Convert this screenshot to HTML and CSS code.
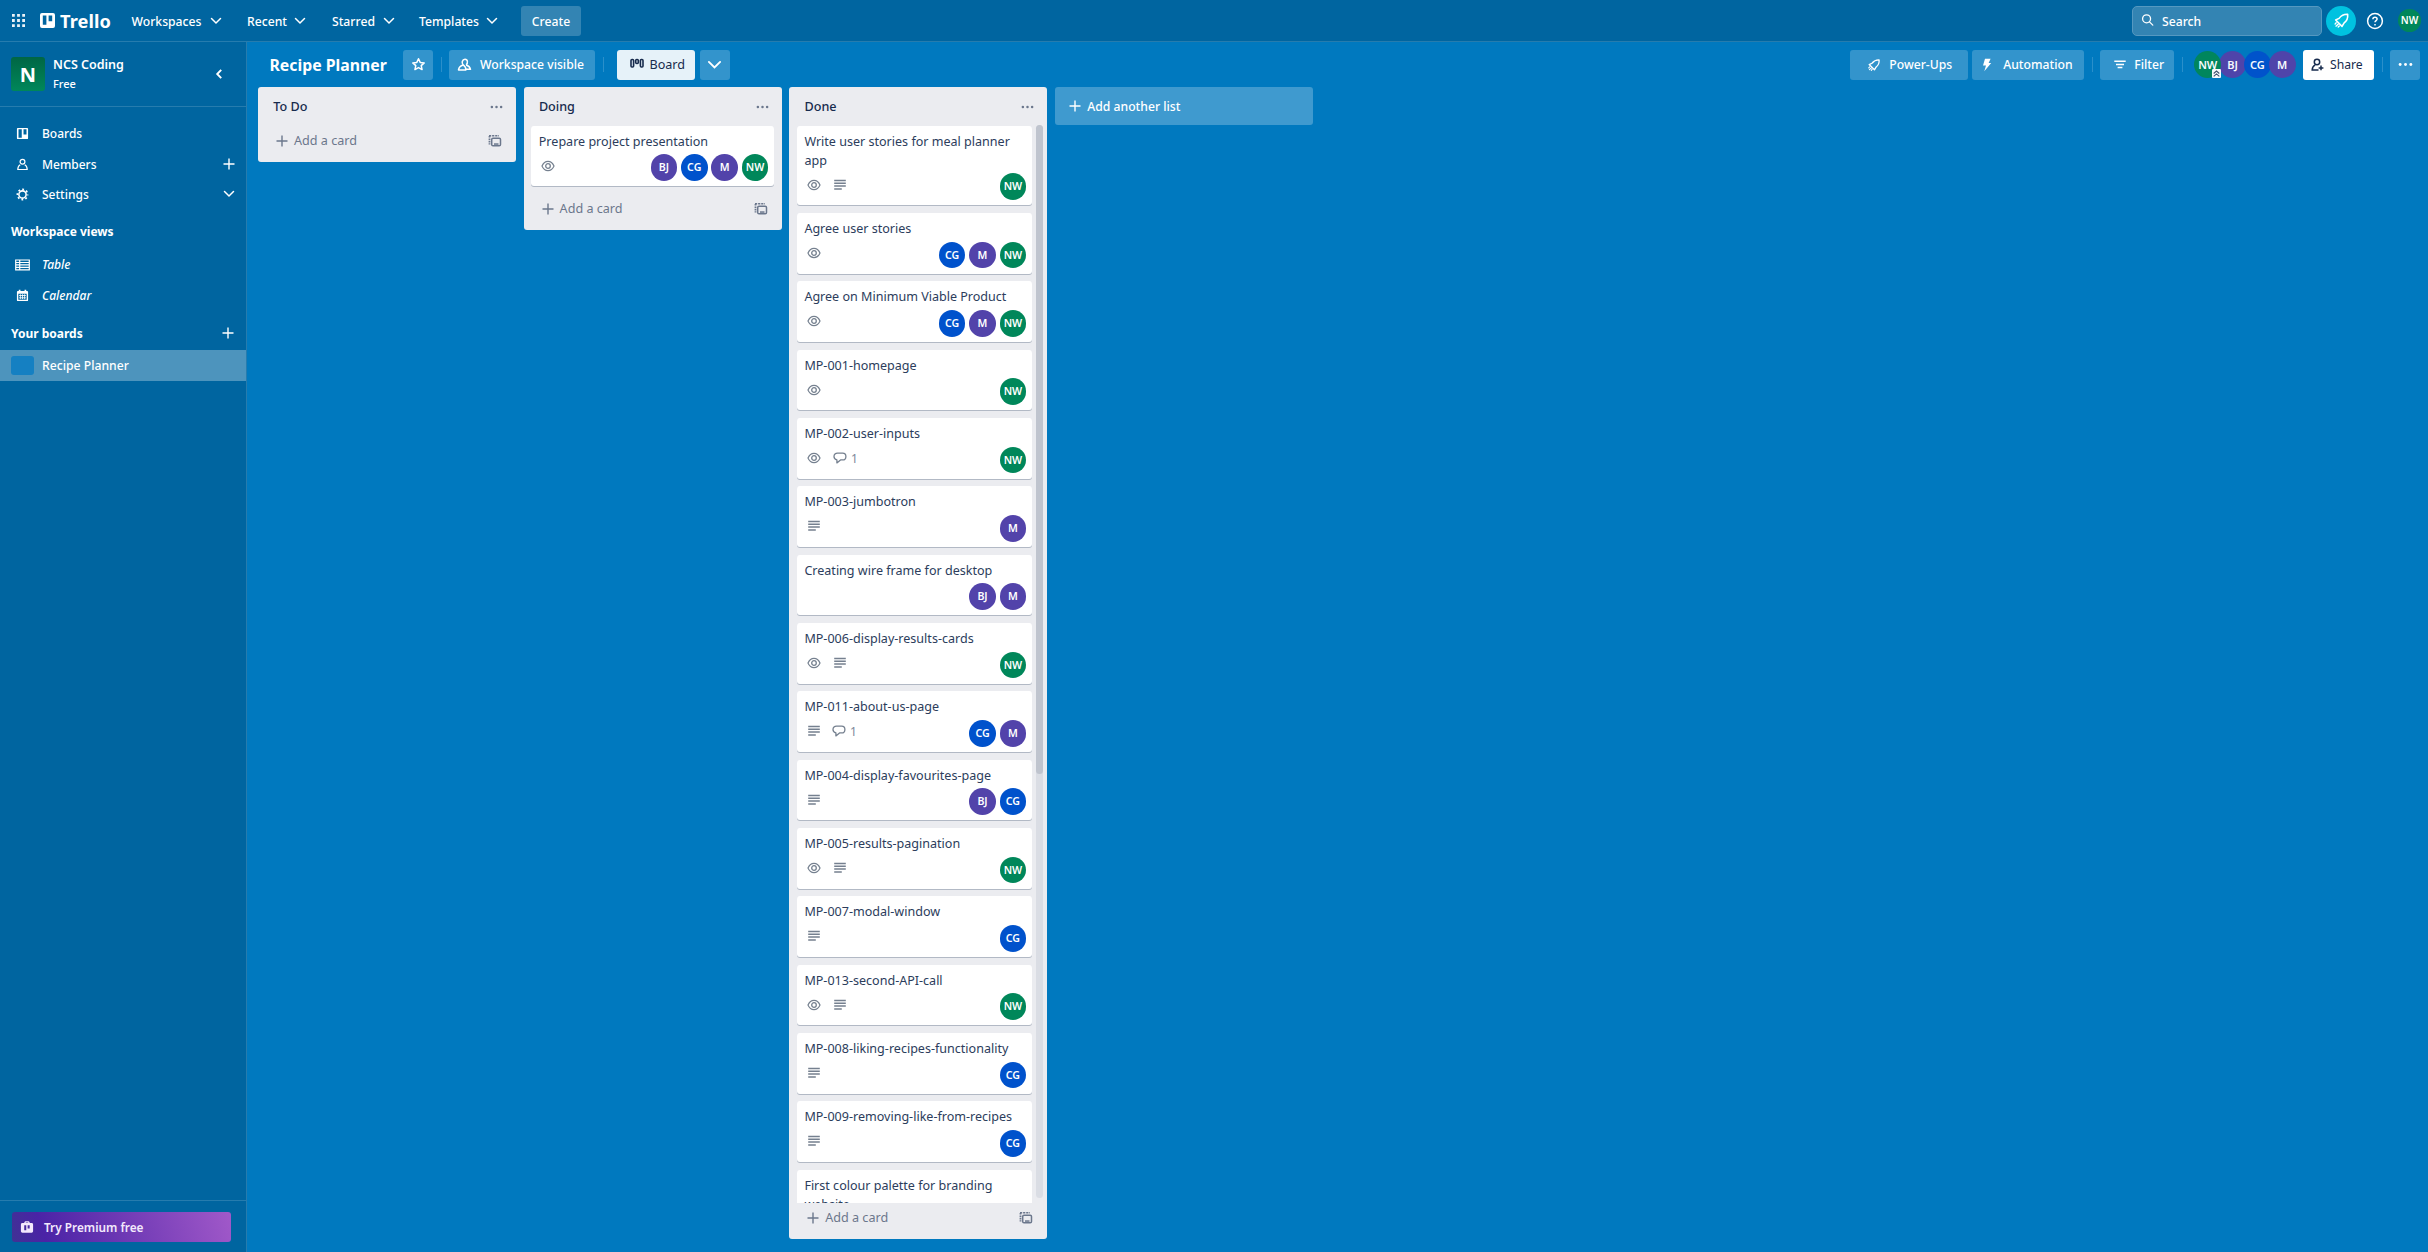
FILE: index.html
```html
<!DOCTYPE html>
<html lang="en">
<head>
<meta charset="utf-8">
<title>Recipe Planner | Trello</title>
<link rel="stylesheet" href="styles.css">
</head>
<body>
<svg class="defs" aria-hidden="true">
  <symbol id="chev" viewBox="0 0 12 8"><path d="M1.500 1.500 6 6l4.500-4.500" fill="none" stroke="currentColor" stroke-width="1.500" stroke-linecap="round"/></symbol>
  <symbol id="plus" viewBox="0 0 12 12"><path d="M6 .5v11M.5 6h11" fill="none" stroke="currentColor" stroke-width="1.400"/></symbol>
  <symbol id="eye" viewBox="0 0 14 12"><path d="M1 6C2.300 3 4.300 1.300 7 1.300S11.700 3 13 6c-1.300 3-3.300 4.700-6 4.700S2.300 9 1 6Z" fill="none" stroke="currentColor" stroke-width="1.200"/><circle cx="7" cy="6" r="2.300" fill="none" stroke="currentColor" stroke-width="1.300"/></symbol>
  <symbol id="desc" viewBox="0 0 12 12"><path d="M.2 1.500h11.600M.2 4.300h11.600M.2 7.100h11.600M.2 9.900h7.600" fill="none" stroke="currentColor" stroke-width="1.500"/></symbol>
  <symbol id="talk" viewBox="0 0 14 12"><path d="M4.500 1.200h5.200c1.900 0 3.200 1.300 3.200 3.200S11.600 7.900 9.700 7.900H7.500l-3.600 3V7.800C2 7.400 1 6.100 1 4.500 1 2.500 2.500 1.200 4.500 1.200Z" fill="none" stroke="currentColor" stroke-width="1.300" stroke-linejoin="round"/></symbol>
  <symbol id="tmpl" viewBox="0 0 14 14"><path d="M1.500 2v8.500" fill="none" stroke="currentColor" stroke-width="1.800" stroke-dasharray="1.600 .8"/><path d="M1 1.800h10" fill="none" stroke="currentColor" stroke-width="1.400" stroke-dasharray="2.200 .9"/><rect x="3.700" y="4.200" width="8.800" height="7.600" rx="1.300" fill="none" stroke="currentColor" stroke-width="1.500"/><path d="M6 9.300h4.500v1.500H6z" fill="currentColor"/></symbol>
  <symbol id="dots" viewBox="0 0 14 4"><circle cx="2" cy="2" r="1.350"/><circle cx="7" cy="2" r="1.350"/><circle cx="12" cy="2" r="1.350"/></symbol>
  <symbol id="rocket" viewBox="0 0 16 16"><path d="M13.800 2.200C10 2 7.500 3.700 5.700 6L2.500 7.500l6 6L10.500 10.200C12.800 8.500 14.200 6 13.800 2.200Z" fill="none" stroke="currentColor" stroke-width="1.500" stroke-linejoin="round"/><path d="M5 11.200 2.800 13.300M3 10.200l-1 1M5.900 13.100l-1 1" fill="none" stroke="currentColor" stroke-width="1.300" stroke-linecap="round"/></symbol>
</svg>

<header class="topbar">
  <svg class="apps" viewBox="0 0 14 14"><path d="M0 0h3v3H0zM5.500 0h3v3h-3zM11 0h3v3h-3zM0 5.500h3v3H0zM5.500 5.500h3v3h-3zM11 5.500h3v3h-3zM0 11h3v3H0zM5.500 11h3v3h-3zM11 11h3v3h-3z"/></svg>
  <div class="logo">
    <svg width="15" height="15" viewBox="0 0 15 15"><path fill-rule="evenodd" d="M2 0h11a2 2 0 0 1 2 2v11a2 2 0 0 1-2 2H2a2 2 0 0 1-2-2V2a2 2 0 0 1 2-2Zm.8 2.500v9.200h3.600V2.500Zm5.800 0v5.800h3.600V2.500Z"/></svg>
    <span>Trello</span>
  </div>
  <nav class="menu">
    <span class="m1">Workspaces<svg><use href="#chev"/></svg></span>
    <span class="m2">Recent<svg><use href="#chev"/></svg></span>
    <span class="m3">Starred<svg><use href="#chev"/></svg></span>
    <span class="m4">Templates<svg><use href="#chev"/></svg></span>
  </nav>
  <button class="create">Create</button>
  <div class="search"><svg viewBox="0 0 14 14"><circle cx="6" cy="5.700" r="4.300"/><path d="m9.200 9 3.500 3.500"/></svg>Search</div>
  <span class="news"><svg viewBox="0 0 16 16"><use href="#rocket"/></svg></span>
  <svg class="help" viewBox="0 0 18 18"><circle cx="9" cy="9" r="7.400"/><path d="M6.900 7.300c0-1.300.9-2.100 2.100-2.100s2.100.8 2.100 1.900c0 1.500-2.100 1.500-2.100 3.200"/><path d="M9 12v1.400"/></svg>
  <span class="me">NW</span>
</header>

<div class="body">
  <aside class="side">
    <div class="ws">
      <span class="ws-logo">N</span>
      <div class="ws-name"><b>NCS Coding</b><small>Free</small></div>
      <svg class="fold" viewBox="0 0 8 12"><path d="M6.200 1.800 2.200 6l4 4.200"/></svg>
    </div>
    <div class="links">
      <div class="row"><svg class="ic" viewBox="0 0 14 14"><path fill="currentColor" fill-rule="evenodd" d="M2 1h10a1 1 0 0 1 1 1v10a1 1 0 0 1-1 1H2a1 1 0 0 1-1-1V2a1 1 0 0 1 1-1Zm.7 1.500v9h3.500v-9Zm5.400 0v5.700h3.200V2.500Z"/></svg>Boards</div>
      <div class="row"><svg class="ic" viewBox="0 0 14 14"><g fill="none" stroke="currentColor" stroke-width="1.300"><circle cx="7" cy="4" r="2.600"/><path d="M4.600 7.300C2.800 8.200 2 9.700 1.900 12.400h10.200C12 9.700 11.200 8.200 9.400 7.300" stroke-linejoin="round"/></g></svg>Members<svg class="end"><use href="#plus"/></svg></div>
      <div class="row"><svg class="ic" viewBox="0 0 14 14"><circle cx="7" cy="7" r="3.900" fill="none" stroke="currentColor" stroke-width="1.700"/><circle cx="7" cy="7" r="5.500" fill="none" stroke="currentColor" stroke-width="1.800" stroke-dasharray="2 2.320" stroke-dashoffset="1"/></svg>Settings<svg class="end down"><use href="#chev"/></svg></div>
    </div>
    <h3 class="cap">Workspace views</h3>
    <div class="row it"><svg class="ic wide" viewBox="0 0 15 12"><path d="M.7 1h13.600v9.800H.7zM.7 3.500h13.600M.7 5.900h13.600M.7 8.300h13.600M4.700 1v9.800" fill="none" stroke="currentColor" stroke-width="1.200"/></svg>Table</div>
    <div class="row it"><svg class="ic" viewBox="0 0 14 14"><path fill="currentColor" fill-rule="evenodd" d="M3 .8h1.800v1.400h4.400V.8H11v1.400h1a1 1 0 0 1 1 1V12a1 1 0 0 1-1 1H2a1 1 0 0 1-1-1V3.200a1 1 0 0 1 1-1h1ZM2.500 5.200v6.300h9V5.200Z"/><path d="M3.300 7h7.400M3.300 9.500h7.400M4.700 5.700v5.200M7 5.700v5.200M9.300 5.700v5.200" stroke="currentColor" stroke-width=".9"/></svg>Calendar</div>
    <h3 class="cap cap2">Your boards<svg class="end"><use href="#plus"/></svg></h3>
    <div class="row cur"><i class="swatch"></i>Recipe Planner</div>
    <div class="promo"><div class="try"><svg viewBox="0 0 14 13"><path fill="currentColor" fill-rule="evenodd" d="M4 2.200C4 1 4.800.3 6 .3h2c1.200 0 2 .7 2 1.900h2a1.600 1.600 0 0 1 1.600 1.600V11A1.600 1.600 0 0 1 12 12.600H2A1.600 1.600 0 0 1 .4 11V3.800A1.600 1.600 0 0 1 2 2.200Zm1.400 0h3.200c0-.5-.3-.7-.8-.7H6.200c-.5 0-.8.200-.8.700ZM4 4.500V10h2.200V4.500Zm3.700 0v3.700h2.200V4.500Z"/></svg>Try Premium free</div></div>
  </aside>

  <main class="main">
    <div class="bar">
      <h1>Recipe Planner</h1>
      <span class="btn sq"><svg width="15" height="15" viewBox="0 0 16 16"><path d="m8 1.900 1.800 3.900 4.300.5-3.200 2.900.9 4.200L8 11.300l-3.800 2.100.9-4.200L1.900 6.300l4.300-.5Z" fill="none" stroke="currentColor" stroke-width="1.600" stroke-linejoin="round"/></svg></span>
      <i class="sep"></i>
      <span class="btn vis"><svg width="15" height="14" viewBox="0 0 15 14"><g fill="none" stroke="currentColor" stroke-width="1.500" stroke-linejoin="round"><path d="M6.200 6.900C5.200 5.900 4.900 4.800 5.300 3.500 5.700 2.100 6.800 1.300 8 1.300s2.200.9 2.400 2.200c.2 1.400-.3 2.600-1.300 3.400"/><path d="M6.200 6.900C3.500 7.600 1.900 9.300 1.500 11.900h7.400c.1-2-.8-3.700-2.700-5Z"/><path d="M9.100 6.900c2.300.6 3.900 2 4.400 4.400H9"/></g></svg>Workspace visible</span>
      <i class="sep sep2"></i>
      <span class="btn view"><svg width="14" height="12" viewBox="0 0 14 12"><g fill="none" stroke="currentColor" stroke-width="1.600"><rect x="1" y="1.500" width="2.600" height="7.500" rx="1"/><rect x="5.700" y="1.500" width="2.600" height="4" rx="1"/><rect x="10.400" y="1.500" width="2.600" height="7.500" rx="1"/></g></svg>Board</span>
      <span class="btn sq drop"><svg width="15" height="10"><use href="#chev"/></svg></span>

      <div class="right">
        <span class="btn pow"><svg width="14" height="14"><use href="#rocket"/></svg>Power-Ups</span>
        <span class="btn auto"><svg width="10" height="14" viewBox="0 0 10 14"><path d="M3 .8h5.600L6.600 5h2.600L2.300 13.300 4 7.600H1Z" fill="currentColor"/></svg>Automation</span>
        <i class="sep"></i>
        <span class="btn filt"><svg width="12" height="10" viewBox="0 0 12 10"><path d="M.3 1.200h11.400M2 4.400h8M3.600 7.600h4.800" stroke="currentColor" stroke-width="1.500"/></svg>Filter</span>
        <i class="sep"></i>
        <div class="people"><span class="g">NW<svg class="rank" viewBox="0 0 8 8"><rect width="8" height="8" rx="1"/><path d="M1.500 4 4 1.800 6.500 4M1.500 6.600 4 4.400l2.500 2.200"/></svg></span><span class="p">BJ</span><span class="b">CG</span><span class="p">M</span></div>
        <span class="btn share"><svg width="13" height="14" viewBox="0 0 13 14"><g fill="none" stroke="currentColor" stroke-width="1.500"><circle cx="6" cy="4" r="2.700"/><path d="M7.500 11.900H1.200C1.300 9.300 2.300 7.800 4.200 6.900"/><path d="M10 7.500v4.800M7.600 9.900h4.800"/></g></svg>Share</span>
        <i class="sep"></i>
        <span class="btn sq"><svg width="15" height="5" fill="currentColor"><use href="#dots"/></svg></span>
      </div>
    </div>

    <div class="board">
      <section class="list">
        <h2>To Do<svg class="dots"><use href="#dots"/></svg></h2>
        <div class="add"><svg class="pl"><use href="#plus"/></svg>Add a card<svg class="tm"><use href="#tmpl"/></svg></div>
      </section>

      <section class="list">
        <h2>Doing<svg class="dots"><use href="#dots"/></svg></h2>
        <div class="cards">
          <article class="card"><p>Prepare project presentation</p><div class="meta"><svg class="eye"><use href="#eye"/></svg><div class="av"><span class="p">BJ</span><span class="b">CG</span><span class="p">M</span><span class="g">NW</span></div></div></article>
        </div>
        <div class="add"><svg class="pl"><use href="#plus"/></svg>Add a card<svg class="tm"><use href="#tmpl"/></svg></div>
      </section>

      <section class="list tall">
        <h2>Done<svg class="dots"><use href="#dots"/></svg></h2>
        <div class="cards">
          <article class="card"><p>Write user stories for meal planner app</p><div class="meta"><svg class="eye"><use href="#eye"/></svg><svg class="desc"><use href="#desc"/></svg><div class="av"><span class="g">NW</span></div></div></article>
          <article class="card"><p>Agree user stories</p><div class="meta"><svg class="eye"><use href="#eye"/></svg><div class="av"><span class="b">CG</span><span class="p">M</span><span class="g">NW</span></div></div></article>
          <article class="card"><p>Agree on Minimum Viable Product</p><div class="meta"><svg class="eye"><use href="#eye"/></svg><div class="av"><span class="b">CG</span><span class="p">M</span><span class="g">NW</span></div></div></article>
          <article class="card"><p>MP-001-homepage</p><div class="meta"><svg class="eye"><use href="#eye"/></svg><div class="av"><span class="g">NW</span></div></div></article>
          <article class="card"><p>MP-002-user-inputs</p><div class="meta"><svg class="eye"><use href="#eye"/></svg><svg class="talk"><use href="#talk"/></svg><em>1</em><div class="av"><span class="g">NW</span></div></div></article>
          <article class="card"><p>MP-003-jumbotron</p><div class="meta"><svg class="desc"><use href="#desc"/></svg><div class="av"><span class="p">M</span></div></div></article>
          <article class="card"><p>Creating wire frame for desktop</p><div class="meta"><div class="av"><span class="p">BJ</span><span class="p">M</span></div></div></article>
          <article class="card"><p>MP-006-display-results-cards</p><div class="meta"><svg class="eye"><use href="#eye"/></svg><svg class="desc"><use href="#desc"/></svg><div class="av"><span class="g">NW</span></div></div></article>
          <article class="card"><p>MP-011-about-us-page</p><div class="meta"><svg class="desc"><use href="#desc"/></svg><svg class="talk"><use href="#talk"/></svg><em>1</em><div class="av"><span class="b">CG</span><span class="p">M</span></div></div></article>
          <article class="card"><p>MP-004-display-favourites-page</p><div class="meta"><svg class="desc"><use href="#desc"/></svg><div class="av"><span class="p">BJ</span><span class="b">CG</span></div></div></article>
          <article class="card"><p>MP-005-results-pagination</p><div class="meta"><svg class="eye"><use href="#eye"/></svg><svg class="desc"><use href="#desc"/></svg><div class="av"><span class="g">NW</span></div></div></article>
          <article class="card"><p>MP-007-modal-window</p><div class="meta"><svg class="desc"><use href="#desc"/></svg><div class="av"><span class="b">CG</span></div></div></article>
          <article class="card"><p>MP-013-second-API-call</p><div class="meta"><svg class="eye"><use href="#eye"/></svg><svg class="desc"><use href="#desc"/></svg><div class="av"><span class="g">NW</span></div></div></article>
          <article class="card"><p>MP-008-liking-recipes-functionality</p><div class="meta"><svg class="desc"><use href="#desc"/></svg><div class="av"><span class="b">CG</span></div></div></article>
          <article class="card"><p>MP-009-removing-like-from-recipes</p><div class="meta"><svg class="desc"><use href="#desc"/></svg><div class="av"><span class="b">CG</span></div></div></article>
          <article class="card"><p>First colour palette for branding website</p></article>
        </div>
        <i class="track"><i class="thumb"></i></i>
        <div class="add"><svg class="pl"><use href="#plus"/></svg>Add a card<svg class="tm"><use href="#tmpl"/></svg></div>
      </section>

      <div class="newlist"><svg class="pl"><use href="#plus"/></svg>Add another list</div>
    </div>
  </main>
</div>
</body>
</html>
```
FILE: styles.css
```css
* { box-sizing: border-box; }
html, body { margin: 0; height: 1252px; overflow: hidden; }
body {
  display: flex; flex-direction: column;
  background: #0079bf; color: #fff;
  font: 500 12.2px/19px "Noto Sans", "Open Sans", sans-serif;
}
.defs { position: absolute; width: 0; height: 0; }
svg { flex: none; display: block; }
h1, h2, h3, p { margin: 0; font: inherit; }

/* top bar */
.topbar {
  flex: none; height: 42px; padding: 0 7px 0 12px;
  display: flex; align-items: center;
  background: #0065a0; border-bottom: 1px solid #267cae;
}
.apps { width: 13px; height: 13px; fill: #fff; opacity: .92; }
.logo { display: flex; align-items: center; margin-left: 15px; width: 91.5px; gap: 5px; fill: #fff; }
.logo span { font: 700 18.2px/24px "Noto Sans", sans-serif; letter-spacing: .1px; padding-top: 1px; }
.menu { display: flex; padding-top: 1px; }
.menu span { display: flex; align-items: center; justify-content: space-between; }
.menu svg { width: 12px; height: 8px; }
.m1 { width: 90px; margin-right: 25.5px; }
.m2 { width: 59px; margin-right: 26px; }
.m3 { width: 62.5px; margin-right: 24.5px; }
.m4 { width: 79px; margin-right: 23px; }
.create {
  width: 60px; height: 30px; padding: 1px 0 0; border: 0; border-radius: 3px;
  background: #3384b3; color: #fff; font: inherit;
}
.search {
  margin-left: auto; width: 190px; height: 30px; padding: 2px 0 0 8px;
  display: flex; align-items: center; gap: 8px;
  border: 1px solid #5598c0; border-radius: 5px; background: #3384b3;
}
.search svg { width: 13px; height: 14px; margin-top: -3px; fill: none; stroke: #fff; stroke-width: 1.4; stroke-linecap: round; }
.news { width: 30px; height: 30px; margin-left: 4px; border-radius: 50%; background: #00c2e0; display: grid; place-items: center; }
.news svg { width: 17px; height: 17px; }
.help { width: 18px; height: 18px; margin-left: 10px; fill: none; stroke: #fff; stroke-width: 1.5; }
.me { width: 23px; height: 23px; margin-left: 14px; border-radius: 50%; background: #00875a; display: grid; place-items: center; font-weight: 600; font-size: 10px; }

/* sidebar */
.body { flex: 1; min-height: 0; display: flex; }
.side { flex: none; width: 247px; display: flex; flex-direction: column; background: #0065a0; border-right: 1px solid #267cae; }
.ws { height: 65px; flex: none; display: flex; align-items: center; padding-left: 11px; border-bottom: 1px solid #267cae; }
.ws-logo { width: 34px; height: 34px; border-radius: 3px; background: linear-gradient(#006644, #00875a); display: grid; place-items: center; font-weight: 700; font-size: 20px; }
.ws-name { margin-left: 8px; flex: 1; display: flex; flex-direction: column; }
.ws-name b { font-weight: 600; font-size: 12.5px; line-height: 19px; }
.ws-name small { font-size: 11px; line-height: 19px; }
.fold { width: 8px; height: 12px; margin-right: 23px; fill: none; stroke: #fff; stroke-width: 1.9; }
.links { padding-top: 11.5px; }
.row { height: 30.4px; flex: none; display: flex; align-items: center; padding: 0 11px 0 16px; font-size: 12px; }
.ic { width: 13px; height: 13px; margin-right: 13px; }
.ic.wide { width: 15px; height: 12px; margin: 0 12px 0 -1px; }
.it { font-style: italic; height: 31px; }
.end { width: 12px; height: 12px; margin-left: auto; }
.end.down { height: 8px; }
.cap { flex: none; height: 39.5px; padding: 5px 0 0 11px; display: flex; align-items: center; font-weight: 700; font-size: 12px; }
.cap2 { margin-top: -1px; height: 40px; padding: 6px 12.5px 0 11px; }
.cur { background: #4d94bd; padding-left: 11px; font-size: 12.2px; }
.swatch { width: 23px; height: 19px; margin-right: 8px; border-radius: 3px; background: #1580c2; }
.promo { margin-top: auto; height: 52px; padding: 11px 0 0 12px; border-top: 1px solid #267cae; }
.try { width: 219px; height: 30px; padding-left: 8px; display: flex; align-items: center; gap: 10px; border-radius: 3px; background: linear-gradient(72deg, #403294 0%, #4a23a6 15%, #a159c9 100%); font-weight: 600; font-size: 11.8px; color: #f3e9fc; }
.try svg { width: 14px; height: 12px; }

/* board header */
.main { flex: 1; min-width: 0; display: flex; flex-direction: column; }
.bar { flex: none; height: 45px; padding: 0 8px 0 22.5px; display: flex; align-items: center; }
h1 { width: 133.5px; font-weight: 700; font-size: 15.8px; line-height: 22px; }
.btn { flex: none; height: 30px; border-radius: 3px; background: #3394cc; display: flex; align-items: center; font-size: 12.2px; }
.btn.sq { width: 30px; justify-content: center; }
.sep { flex: none; width: 1px; height: 15px; margin: 0 7.5px; background: #2a8fca; }
.vis { width: 146px; padding-left: 8px; gap: 8px; }
.sep2 { margin-right: 13px; }
.view { width: 78px; padding-left: 13px; gap: 6px; background: #e6f2f9; color: #172b4d; font-weight: 400; font-size: 12.6px; }
.view svg { margin-top: -1px; }
.drop { margin-left: 5px; }
.right { margin-left: auto; display: flex; align-items: center; }
.pow { width: 118px; padding-left: 17px; gap: 8px; }
.auto { width: 112px; margin-left: 4px; padding-left: 10px; gap: 11px; }
.filt { width: 74px; padding-left: 14px; gap: 8px; }
.people { display: flex; margin-left: 4px; }
.people span, .av span { width: 26.6px; height: 26.6px; border-radius: 50%; display: grid; place-items: center; font: 600 10.6px/1 "Noto Sans", sans-serif; }
.people span { position: relative; width: 27px; height: 27px; margin-right: -2.200px; opacity: .97; font-size: 11px; }
.rank { position: absolute; right: 0; bottom: 0; width: 9px; height: 9px; }
.people .g { z-index: 1; }
.rank rect { fill: #fff; }
.rank path { fill: none; stroke: #42526e; stroke-width: 1; }
.g { background: #00875a; }
.p { background: #5243aa; }
.b { background: #0052cc; }
.share { width: 71px; margin-left: 9.500px; padding-left: 8px; gap: 6px; background: #fff; color: #172b4d; font-weight: 400; }

/* lists */
.board { flex: 1; min-height: 0; padding: 0 0 13px 11px; display: flex; align-items: flex-start; gap: 7.6px; }
.list { position: relative; width: 258px; display: flex; flex-direction: column; border-radius: 3px; background: #ebecf0; color: #172b4d; }
.list.tall { height: 100%; }
.list h2 { flex: none; height: 38.5px; padding: 1px 13px 0 15.3px; display: flex; align-items: center; justify-content: space-between; font-weight: 500; font-size: 12.6px; }
.dots { width: 13px; height: 4px; fill: #6b778c; }
.cards { flex: 0 1 auto; min-height: 0; overflow: hidden; padding: 0 7.6px; }
.tall .cards { flex: 1; padding-right: 15.3px; }
.card { min-height: 60.75px; margin-bottom: 7.6px; padding: 6px 5.7px 5.35px 7.6px; border-radius: 3px; background: #fff; box-shadow: 0 1px 0 rgba(9, 30, 66, .25); }
.card p { font-weight: 400; font-size: 12.55px; line-height: 19px; color: #2c3d5c; }
.meta { height: 26.6px; margin-top: 3.8px; padding-left: 2.5px; display: flex; align-items: center; color: #75808f; }
.meta > svg { margin-top: -4px; }
.eye { width: 14px; height: 12px; margin-right: 13px; }
.desc { width: 12px; height: 12px; margin: 0 13px 0 1px; }
.eye + .desc { margin-left: 0; }
.talk { width: 14px; height: 12px; margin-right: 4px; }
.eye + .talk { margin-left: -1px; }
.desc + .talk { margin-left: -1px; }
.meta em { font-style: normal; font-weight: 400; font-size: 12px; margin-top: -3px; color: #7d889b; }
.av { margin-left: auto; display: flex; gap: 3.8px; color: #fff; }
.add { flex: none; height: 36.3px; padding: 0 14px 6px 18px; display: flex; align-items: center; font-weight: 400; font-size: 12.6px; color: #6b778c; }
.pl { width: 12px; height: 12px; margin-right: 6px; }
.tm { width: 14px; height: 14px; margin-left: auto; }
.track { position: absolute; right: 3.8px; top: 38px; width: 7.6px; height: 1073px; border-radius: 4px; background: #dadde4; }
.thumb { display: block; height: 649px; border-radius: 4px; background: #bfc4ce; }
.newlist { width: 258px; height: 38px; padding-left: 14.500px; display: flex; align-items: center; border-radius: 3px; background: #3f9acf; }
```
